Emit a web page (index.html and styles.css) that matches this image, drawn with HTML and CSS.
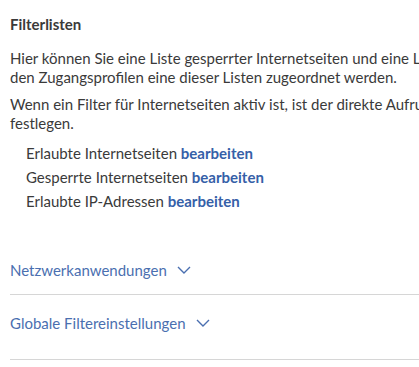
FILE: index.html
```html
<!DOCTYPE html>
<html lang="de">
<head>
    <meta charset="UTF-8">
    <title>Filterlisten</title>
    <link rel="stylesheet" href="styles.css">
</head>
<body>
    <section class="panel">
        <h2>Filterlisten</h2>
        <p>Hier können Sie eine Liste gesperrter Internetseiten und eine Liste erlaubter Internetseiten anlegen. Anschließend kann<br>
            den Zugangsprofilen eine dieser Listen zugeordnet werden.</p>
        <p>Wenn ein Filter für Internetseiten aktiv ist, ist der direkte Aufruf von IP-Adressen gesperrt. Hier können Sie Ausnahmen<br>
            festlegen.</p>
        <ul class="lists">
            <li>Erlaubte Internetseiten <a href="#">bearbeiten</a></li>
            <li>Gesperrte Internetseiten <a href="#">bearbeiten</a></li>
            <li>Erlaubte IP-Adressen <a href="#">bearbeiten</a></li>
        </ul>
    </section>

    <div class="toggle">
        <a href="#">Netzwerkanwendungen
            <svg width="14" height="8" viewBox="0 0 14 8"><path d="M1 1l6 6 6-6" fill="none" stroke="currentColor" stroke-width="1.4"/></svg>
        </a>
    </div>
    <div class="toggle last">
        <a href="#">Globale Filtereinstellungen
            <svg width="14" height="8" viewBox="0 0 14 8"><path d="M1 1l6 6 6-6" fill="none" stroke="currentColor" stroke-width="1.4"/></svg>
        </a>
    </div>
</body>
</html>
```

FILE: styles.css
```css
/* General */
body {
    font-family: 'Lato', sans-serif;
    font-size: 15px;
    color: #3a3a3a;
    background-color: #fff;
    margin: 0;
    padding: 0 0 0 10px;
    overflow: hidden;
}

.panel {
    white-space: nowrap;
}

h2 {
    font-size: 15px;
    font-weight: bold;
    margin: 14px 0 15px;
    line-height: 20px;
}

p {
    margin: 0 0 8px;
    line-height: 19px;
}

a {
    color: #3560a8;
    text-decoration: none;
}

.lists {
    list-style: none;
    margin: 1px 0 0;
    padding: 0 0 0 16px;
}

.lists li {
    line-height: 24px;
}

.lists a {
    font-weight: bold;
}

/* Aufklappbare Bereiche */
.toggle {
    border-bottom: 1px solid #d6d6d6;
    padding: 18px 0 14px;
    line-height: 20px;
}

.toggle:first-of-type {
    margin-top: 29px;
}

.toggle.last {
    padding-bottom: 26px;
}

.toggle a {
    color: #4a6fb0;
    display: inline-flex;
    align-items: center;
    gap: 10px;
}
```
